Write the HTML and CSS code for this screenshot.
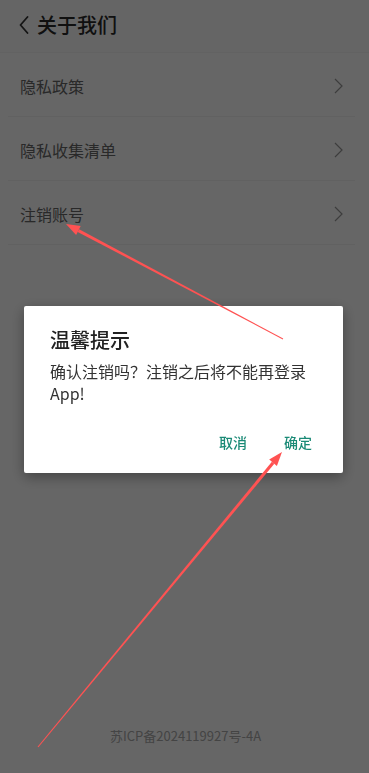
FILE: index.html
```html
<!DOCTYPE html>
<html lang="zh-CN">
<head>
    <meta charset="UTF-8">
    <meta name="viewport" content="width=device-width, initial-scale=1.0">
    <link rel="stylesheet" href="styles.css">
</head>
<body>
<div class="page">
    <header class="topbar">
        <svg class="back" width="10" height="18" viewBox="0 0 10 18">
            <polyline points="8.5,1 1.5,9 8.5,17" fill="none" stroke="#333" stroke-width="1.8" stroke-linecap="round" stroke-linejoin="round"/>
        </svg>
        <h1>关于我们</h1>
    </header>

    <ul class="menu">
        <li class="item">
            <span>隐私政策</span>
            <svg class="arrow" width="9" height="16" viewBox="0 0 9 16"><polyline points="1,1 8,8 1,15" fill="none" stroke="#999" stroke-width="1.2"/></svg>
        </li>
        <li class="item">
            <span>隐私收集清单</span>
            <svg class="arrow" width="9" height="16" viewBox="0 0 9 16"><polyline points="1,1 8,8 1,15" fill="none" stroke="#999" stroke-width="1.2"/></svg>
        </li>
        <li class="item">
            <span>注销账号</span>
            <svg class="arrow" width="9" height="16" viewBox="0 0 9 16"><polyline points="1,1 8,8 1,15" fill="none" stroke="#999" stroke-width="1.2"/></svg>
        </li>
    </ul>

    <div class="grow"></div>
    <footer class="icp">苏ICP备2024119927号-4A</footer>
</div>

<div class="mask">
    <div class="dialog">
        <h2>温馨提示</h2>
        <p>确认注销吗？注销之后将不能再登录App!</p>
        <div class="actions">
            <button>取消</button>
            <button>确定</button>
        </div>
    </div>
</div>

<svg class="marks" width="369" height="773" viewBox="0 0 369 773">
    <polygon points="79.1,229.3 77.7,231.9 282.8,339.4 283.2,338.6" fill="#ff5252"/>
    <polygon points="66,224 80.7,226.1 76.1,235" fill="#ff5252"/>
    <polygon points="274.3,463.8 271.9,461.8 37.6,746.7 38.4,747.3" fill="#ff5252"/>
    <polygon points="282,452 276.9,466 269.2,459.6" fill="#ff5252"/>
</svg>
</body>
</html>
```

FILE: styles.css
```css
* {
	box-sizing: border-box;
}

body {
	margin: 0;
	padding: 0;
	background-color: #fff;
	font-family: "Noto Sans CJK SC", "Noto Sans", sans-serif;
}

.page {
	min-height: 100vh;
	display: flex;
	flex-direction: column;
}

.topbar {
	height: 53px;
	display: flex;
	align-items: center;
	padding: 0 0 2px 19px;
	border-bottom: 1px solid #f4f4f4;
	background-color: #fcfcfc;
}

.topbar .back {
	margin-right: 8px;
}

.topbar h1 {
	margin: 0;
	font-size: 20px;
	font-weight: 500;
	color: #2a2a2a;
	line-height: 28px;
}

.menu {
	list-style: none;
	margin: 0;
	padding: 0;
}

.menu .item {
	height: 64px;
	display: flex;
	align-items: center;
	justify-content: space-between;
	padding: 2px 26px 0 20px;
	position: relative;
	font-size: 16px;
	color: #666;
}

.menu .item::after {
	content: "";
	position: absolute;
	left: 8px;
	right: 14px;
	bottom: 0;
	height: 1px;
	background-color: #f2f2f2;
}

.grow {
	flex: 1;
}

.icp {
	text-align: center;
	font-size: 13px;
	line-height: 18px;
	color: #aaa;
	padding: 0 0 28px 2px;
}

.mask {
	position: fixed;
	top: 0;
	left: 0;
	right: 0;
	bottom: 0;
	background-color: rgba(0, 0, 0, 0.6);
	display: flex;
	align-items: center;
	justify-content: center;
	padding: 6px 26px 0 24px;
}

.dialog {
	width: 100%;
	background-color: #fff;
	border-radius: 2px;
	padding: 20px 23px 13px 26px;
	box-shadow: 0 4px 14px rgba(0, 0, 0, 0.35);
}

.dialog h2 {
	margin: 0;
	font-size: 20px;
	font-weight: 500;
	line-height: 28px;
	color: #222;
}

.dialog p {
	margin: 6px 0 0;
	font-size: 16px;
	line-height: 22px;
	color: #333;
}

.actions {
	display: flex;
	justify-content: flex-end;
	gap: 21px;
	margin-top: 20px;
}

.actions button {
	background: none;
	border: none;
	padding: 8px;
	font-family: inherit;
	font-size: 14px;
	font-weight: 500;
	line-height: 20px;
	color: #1a8a76;
}

.marks {
	position: fixed;
	top: 0;
	left: 0;
	pointer-events: none;
}
```
